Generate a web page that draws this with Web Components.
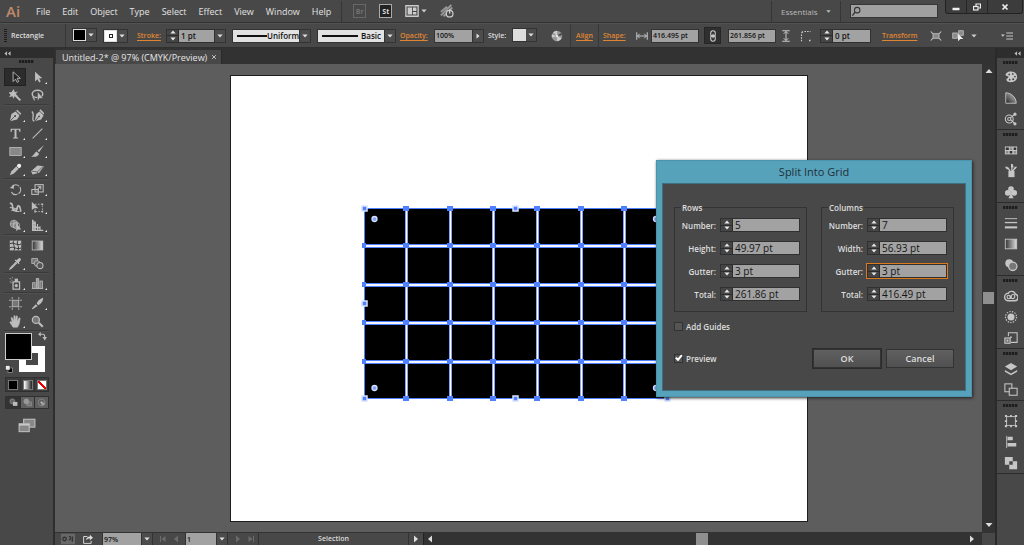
<!DOCTYPE html>
<html lang="en">
<head>
<meta charset="utf-8">
<title>Untitled-2</title>
<style>
html, body { margin: 0; height: 100%; }
body { font-family: "Open Sans", "Noto Sans", sans-serif; font-size: 9px; color: #dedede; background: #5d5d5d; overflow: hidden; }
</style>
</head>
<body>
<app-window></app-window>
<script>
const RESET = `
  *, *::before, *::after { box-sizing: border-box; }
  button, input, select { font: inherit; color: inherit; margin: 0; padding: 0; border: 0; border-radius: 0; background: none; appearance: none; outline: 0; }
  button { display: inline-flex; align-items: center; justify-content: center; }
  a { color: #e08633; text-decoration: underline; text-underline-offset: 2px; white-space: nowrap; }
`;
function define(name, css, render) {
  customElements.define(name, class extends HTMLElement {
    connectedCallback() {
      if (this.shadowRoot) return;
      const root = this.attachShadow({ mode: "open" });
      root.innerHTML = `<style>${RESET}${css}</style>${render(this)}`;
    }
  });
}

/* ---------- icons, all on a 16 x 16 field ---------- */
const L = 'fill="none" stroke="currentColor"';
const ICONS = {
  select: `<path d="M5 1v12l3-3 2 4 2-1-2-4h4z" fill="#222" stroke="currentColor" stroke-width="1.1"/>`,
  direct: `<path d="M5 1v12l3-3 2 4 2-1-2-4h4z" fill="currentColor"/>`,
  wand: `<path d="M7 7l7 7" stroke="currentColor" stroke-width="2.4"/><path d="M6 0l1 4 4-1-3 3 3 2-4 0-1 4-2-3-4 1 2-3-3-3 4 0z" fill="currentColor"/>`,
  lasso: `<ellipse cx="8" cy="6" rx="6.500" ry="4.500" ${L} stroke-width="1.8"/><path d="M3 9c-2 2 2 2 1 5" ${L} stroke-width="1.500"/><path d="M8 3v12l2.500-3.500h4.500z" fill="currentColor" stroke="#484848" stroke-width=".6"/>`,
  pen: `<path d="M1 15l2-9 5-3 5 5-3 5z" fill="currentColor"/><path d="M9.500 1.500l5 5" stroke="currentColor" stroke-width="2"/><path d="M1 15l6-6" stroke="#444"/><circle cx="7.500" cy="8.500" r="1.200" fill="#444"/>`,
  curve: `<path d="M4.500 15l2-9 4-3 5 5-3 5z" fill="currentColor"/><path d="M11 1l5 5" stroke="currentColor" stroke-width="2"/><path d="M5 15l5-6" stroke="#444"/><circle cx="10" cy="9" r="1" fill="#444"/><path d="M4 15c-5-2 2-8-3-12" ${L} stroke-width="1.500"/>`,
  type: `<path d="M2 2h12v4h-1l-1-2.500H9.200V12.500l2 .8v.7H4.800v-.7l2-.8V3.500H4L3 6H2z" fill="currentColor"/>`,
  line: `<path d="M2 14L14 2" stroke="currentColor" stroke-width="1.300"/>`,
  rect: `<rect x="1" y="3" width="14" height="10" fill="#888" stroke="currentColor"/>`,
  brush: `<path d="M16 0L8 7l2 2z" fill="currentColor"/><path d="M7 8l3 3c-2 4-6 4-10 3 4-1 4-5 7-6z" fill="currentColor"/>`,
  pencil: `<path d="M11 2l3 3-8 8-5 2 2-5z" fill="currentColor"/><circle cx="12.500" cy="3.500" r="2.500" fill="#eee"/><path d="M9 4l3 3" stroke="#555"/>`,
  eraser: `<path d="M0 10l8-7 8 1-6 8-8 2z" fill="currentColor"/><path d="M1 10l7 1 7-7M8 11v2" fill="none" stroke="#555"/>`,
  rotate: `<path d="M4 4a6 6 0 1 1-1 7" ${L} stroke-width="1.500" stroke-dasharray="9 1.500"/><path d="M1 6l5 1 0-5z" fill="currentColor"/>`,
  scale: `<rect x="1" y="8" width="8" height="6" ${L} stroke-width="1.300"/><rect x="5" y="2" width="10" height="9" ${L} stroke-width="1.300"/><path d="M7 9l4-4M8 4h4v4" ${L} stroke-width="1.300"/>`,
  width: `<path d="M1 3c6-1 1 9 6 9s2-7 5-6 1 5 3 7" ${L} stroke-width="2"/><path d="M1 8l6 1M3 12l8-4M8 13l5 0" ${L} stroke-width="1.300"/>`,
  free: `<rect x="5" y="4" width="9" height="9" ${L} stroke-dasharray="2 1.500"/><path d="M1 1v10l3-2 5 0z" fill="currentColor"/><path d="M13 3h2v2h-2zM13 12h2v2h-2zM4 12h2v2H4z" fill="currentColor"/>`,
  shape: `<circle cx="6" cy="6" r="4.500" fill="#777" stroke="currentColor"/><circle cx="9" cy="8" r="4" ${L}/><path d="M2 6h9M6 2v8" ${L}/><path d="M9 5v10l2-2h4z" fill="currentColor"/>`,
  persp: `<path d="M2 1v13h13M5 3v11M8 6v8M11 9v5M2 5l4 1M2 9l9 2" ${L} stroke-width="1.500"/><path d="M2 1l4 3v10H2z" fill="currentColor" opacity=".7"/>`,
  mesh: `<rect x="1" y="2" width="14" height="12" fill="currentColor"/><path d="M1 6c4-3 9 3 14 0M1 11c4-3 9 3 14 0M6 2c-3 4 3 8 0 12M11 2c-3 4 3 8 0 12" fill="none" stroke="#333" stroke-width="1.200"/>`,
  gradient: `<defs><linearGradient id="g"><stop offset="0" stop-color="#333"/><stop offset="1" stop-color="#ddd"/></linearGradient></defs><rect x="1.500" y="2.500" width="13" height="11" fill="url(#g)" stroke="currentColor"/>`,
  dropper: `<path d="M9 6l-7 7-1 2 2-1 7-7" ${L} stroke-width="1.300"/><path d="M7 4l5 5 1-1-1-1 3-4-2-2-4 3-1-1z" fill="currentColor"/>`,
  blend: `<rect x="1" y="2" width="7" height="6" fill="#777" stroke="currentColor"/><circle cx="7.500" cy="8" r="3.500" fill="#666" stroke="currentColor"/><circle cx="11" cy="10.500" r="3.800" fill="#555" stroke="currentColor" stroke-width="1.300"/>`,
  spray: `<rect x="5" y="6" width="8" height="9" ${L} stroke-width="1.500"/><path d="M7 2h4v4H7z" fill="currentColor"/><circle cx="9" cy="10.500" r="2" fill="currentColor"/><path d="M1 2h1M3 4h1M1 6h1M4 1h1M3 7h1" stroke="currentColor" stroke-width="1.300"/>`,
  graph: `<path d="M1 14h14" ${L}/><rect x="2" y="7" width="3" height="7" fill="#777" stroke="currentColor"/><rect x="6.500" y="2" width="3" height="12" fill="#999" stroke="currentColor"/><rect x="11" y="5" width="3" height="9" fill="#777" stroke="currentColor"/>`,
  artboard: `<rect x="4" y="4" width="8" height="8" fill="#777" stroke="currentColor"/><path d="M4 0v3M12 0v3M4 13v3M12 13v3M0 4h3M0 12h3M13 4h3M13 12h3" ${L}/>`,
  knife: `<path d="M15 1c-4 1-7 4-8 7l2 2c4-2 6-5 6-9zM6 9l2 2-6 4-1-1z" fill="currentColor"/>`,
  hand: `<path d="M4 9L2.500 3.500l1.300-.3L6 7V1h1.500v6L9 1l1.400.4L10 8l2.500-4.500 1.300.5L12.500 11l-2 4H5L1 9l1-1z" fill="currentColor" stroke="currentColor" stroke-width=".7"/>`,
  zoom: `<circle cx="6" cy="6" r="4.300" fill="#777" stroke="currentColor" stroke-width="1.600"/><path d="M9.500 9.500l5 5" stroke="currentColor" stroke-width="2.600"/>`,
  swap: `<path d="M3 4h6q3 0 3 5" ${L} stroke-width="2"/><path d="M0 4l5-4v8zM8 9h8l-4 6z" fill="currentColor"/>`,
  initial: `<rect x="6" y="6" width="9" height="9" fill="#000" stroke="#999" stroke-width="1.500"/><rect x="1" y="1" width="9" height="9" fill="#eee" stroke="#222"/>`,
  draw1: `<circle cx="6" cy="6" r="4.500" fill="#666" stroke="currentColor"/><rect x="7" y="7" width="8" height="7" fill="#bbb"/>`,
  draw2: `<rect x="7" y="7" width="8" height="7" fill="#777" stroke="currentColor"/><circle cx="6" cy="6" r="4.500" fill="#999" stroke="currentColor"/>`,
  draw3: `<circle cx="8" cy="8" r="6" ${L}/><path d="M8 8h6v4l-6 2z" fill="#999"/><circle cx="8" cy="8" r="2" fill="#bbb"/>`,
  screen: `<rect x="5" y="2" width="10" height="7" fill="#888" stroke="currentColor"/><rect x="1" y="6" width="9" height="7" fill="#888" stroke="currentColor"/><path d="M1 7h9" stroke="#ddd"/>`,
  palette: `<path d="M9 2c-5-1-8 3-7 4 1 2 3 0 3 2s-3 1-2 4 12 3 12-4c0-4-3-6-6-6z" fill="currentColor"/><circle cx="6" cy="5" r="1" fill="#444"/><circle cx="10" cy="4.500" r="1" fill="#444"/><circle cx="12.500" cy="7.500" r="1" fill="#444"/><circle cx="10.500" cy="10.500" r="1.200" fill="#444"/><circle cx="6.500" cy="11" r="1" fill="#444"/>`,
  guide: `<defs><linearGradient id="q" x1="0" y1="1" x2="1" y2="0"><stop offset="0" stop-color="#222"/><stop offset="1" stop-color="#ccc"/></linearGradient></defs><path d="M2 2c6 0 12 5 12 12H2z" fill="url(#q)" stroke="currentColor"/>`,
  themes: `<circle cx="6" cy="8" r="4.500" ${L} stroke-width="1.200"/><circle cx="6" cy="8" r="1.800" ${L} stroke-width="1.200"/><path d="M7 7l5-4M8 9l4 4" ${L} stroke-width="1.300"/><circle cx="12.500" cy="2.500" r="1.800" fill="currentColor"/><circle cx="12.500" cy="13.500" r="1.800" fill="currentColor"/>`,
  swatches: `<rect x="1" y="4" width="14" height="9" fill="currentColor"/><path d="M2 5h3.500v3H2zM11 5h3v3h-3zM6.500 9h3v3h-3z" fill="#333"/><path d="M6.500 5h3v3h-3zM2 9h3v3H2zM11 9h3v3h-3z" fill="#8c8c8c"/>`,
  brushes: `<rect x="5" y="8" width="7" height="7" fill="currentColor"/><path d="M7 8L4 4M9 8V3M10 8l3-4" ${L} stroke-width="1.500"/><path d="M1 3l3 0 1 3-2 0zM8 0h2l1 4H8zM12 3l3 0-2 3z" fill="currentColor"/>`,
  club: `<circle cx="8" cy="4.500" r="3.200" fill="currentColor"/><circle cx="4.300" cy="9" r="3.200" fill="currentColor"/><circle cx="11.700" cy="9" r="3.200" fill="currentColor"/><path d="M7 7h2l0 4 2 4H5l2-4z" fill="currentColor"/>`,
  stroke: `<path d="M1 3h14" stroke="currentColor"/><path d="M1 7.500h14" stroke="currentColor" stroke-width="1.500"/><path d="M1 13h14" stroke="currentColor" stroke-width="2.400"/>`,
  transp: `<circle cx="6" cy="6" r="4.500" fill="currentColor"/><circle cx="10" cy="9.500" r="4.800" fill="#777" stroke="currentColor" stroke-width="1.500"/>`,
  cloud: `<path d="M5 13.500a4.300 4.300 0 0 1 0-8.600C6 2 12 1.500 13 6a3.800 3.800 0 0 1-1 7.500z" ${L} stroke-width="1.600"/><circle cx="5.500" cy="9.200" r="2" ${L} stroke-width="1.300"/><path d="M6 10.500c3 0 2-5 4.500-4.500s2.500 4.500 0 5-3-2-4-3" ${L} stroke-width="1.300"/>`,
  appear: `<circle cx="8" cy="8" r="4" fill="currentColor"/><circle cx="8" cy="8" r="6.300" ${L} stroke-width="1.400" stroke-dasharray="1.500 1.500"/>`,
  styles: `<path d="M5 6V2h10v11H8" ${L} stroke-width="1.200"/><rect x="1" y="8" width="6" height="6" fill="#666" stroke="currentColor" stroke-width="1.300"/><circle cx="4" cy="11" r="1.200" fill="currentColor"/><circle cx="8" cy="7" r="1" fill="currentColor"/>`,
  layers: `<path d="M8 1l7 4-7 4.500L1 5z" fill="currentColor"/><path d="M1 9l7 4 7-4v2l-7 4-7-4z" fill="currentColor"/>`,
  boards: `<rect x="1" y="1" width="8" height="9" ${L} stroke-width="1.200"/><rect x="6" y="6" width="9" height="8" fill="#484848" stroke="currentColor" stroke-width="1.200"/>`,
  transform: `<rect x="3" y="3" width="10" height="10" ${L}/><path d="M1 1h2.500v2.500H1zM7 1h2v2.500H7zM12.500 1H15v2.500h-2.500zM1 7h2.500v2H1zM12.500 7H15v2h-2.500zM1 12.500h2.500V15H1zM7 12.500h2V15H7zM12.500 12.500H15V15h-2.500z" fill="currentColor"/>`,
  align: `<path d="M3 1v14" stroke="currentColor"/><path d="M4 2h6v4H4zM4 9h10v4H4z" fill="currentColor"/>`,
  pathf: `<path d="M1 1h9v5h5v9H6v-5H1z" fill="currentColor"/><path d="M6 6h4v4H6z" fill="#484848"/>`,
  arrange: `<path d="M1 2h14v12H1z" ${L} stroke-width="1.500"/><path d="M3 4h5v8H3zM9 4h4v4H9zM9 9h4v3H9z" fill="currentColor"/>`,
  power: `<path d="M1 9l7-6M1 13L13 1M4 14L14 4" stroke="#999" stroke-width="2.200"/><circle cx="11" cy="11" r="3.800" fill="#484848" stroke="currentColor" stroke-width="1.400"/><path d="M11 6v5" stroke="currentColor" stroke-width="1.500"/>`,
  search: `<circle cx="9" cy="6" r="4" fill="none" stroke="#333" stroke-width="1.500"/><path d="M6 9l-4 5" stroke="#333" stroke-width="2"/>`,
  globe: `<circle cx="8" cy="8" r="7" fill="#999"/><path d="M8 8L3 3a7 7 0 0 1 5-2zM8 8l6 3a7 7 0 0 1-6 4zM8 8l-7 2 0-4z" fill="#ccc"/><path d="M8 8l5-4 2 3z" fill="#444"/><circle cx="8" cy="8" r="1.500" fill="#eee"/>`,
  wide: `<path d="M1 3v10M15 3v10M2 8h12M5 5L2 8l3 3M11 5l3 3-3 3" ${L} stroke-width="1.300"/>`,
  tall: `<path d="M3 1h10M3 15h10M8 2v12M5 5l3-3 3 3M5 11l3 3 3-3" ${L} stroke-width="1.300"/>`,
  chain: `<rect x="5" y="1" width="6" height="8" rx="3" ${L} stroke-width="1.400"/><rect x="5" y="7" width="6" height="8" rx="3" ${L} stroke-width="1.400"/><path d="M8 5v6" ${L} stroke-width="1.300"/>`,
  corner: `<path d="M2 15V6M6 2h8" ${L} stroke-width="1.500" stroke-dasharray="2 1.500"/><path d="M2 4l2-2" ${L} stroke-width="1.500"/><path d="M12 14h2" ${L} stroke-width="2"/>`,
  isolate: `<rect x="4" y="5" width="8" height="6" fill="#888" stroke="currentColor"/><path d="M1 2l3 3M15 2l-3 3M1 14l3-3M15 14l-3-3" ${L} stroke-width="1.400"/>`,
  similar: `<rect x="1" y="4" width="6" height="7" fill="#888" stroke="currentColor"/><rect x="9" y="1" width="6" height="6" fill="#888" stroke="currentColor"/><path d="M8 5v10l3-3h4z" fill="#eee"/>`,
  menu: `<path d="M0 6h5L2.500 9z" fill="currentColor"/><path d="M7 4h9M7 8h9M7 12h9" ${L} stroke-width="1.300"/>`,
  down: `<path d="M1 4h14l-7 8z" fill="currentColor"/>`,
  up: `<path d="M1 12h14L8 4z" fill="currentColor"/>`,
  right: `<path d="M4 1v14l8-7z" fill="currentColor"/>`,
  left: `<path d="M12 1v14L4 8z" fill="currentColor"/>`,
  first: `<path d="M3 2v12" ${L} stroke-width="2"/><path d="M13 2v12L5 8z" fill="currentColor"/>`,
  last: `<path d="M13 2v12" ${L} stroke-width="2"/><path d="M3 2v12l8-6z" fill="currentColor"/>`,
  collapse: `<path d="M7 3v10L1 8zM15 3v10L9 8z" fill="currentColor"/>`,
  min: `<path d="M1 12h14" stroke="currentColor" stroke-width="5"/>`,
  restore: `<path d="M6 6V2h9v8h-4" ${L} stroke-width="2.400"/><rect x="1" y="7" width="9" height="7" ${L} stroke-width="2.400"/>`,
  close: `<path d="M3 3l10 10M13 3L3 13" stroke="currentColor" stroke-width="3.400"/>`,
  cross: `<path d="M3 3l10 10M13 3L3 13" stroke="currentColor" stroke-width="2"/>`,
  proof: `<rect x="0" y="2" width="16" height="12" fill="#686868"/><path d="M2 8a2 2 0 1 1 4 0 2 2 0 1 1-4 0M9 5a2 2 0 1 1 0 4M13 5v6" stroke="#333" fill="none" stroke-width="1.500"/>`,
  share: `<path d="M7 4H1v11h12v-4" ${L} stroke-width="1.500"/><path d="M5 10c0-4 3-6 6-6V1l5 5-5 4V7c-3 0-4 1-6 3z" fill="currentColor"/>`,
};
define("ui-icon", `:host{display:inline-block;flex:none;width:var(--size,12px);height:var(--size,12px)} svg{display:block;width:100%;height:100%}`,
  h => `<svg viewBox="0 0 16 16" aria-hidden="true">${ICONS[h.getAttribute("name")]}</svg>`);

define("grip-bar", `:host{display:block;width:15px;height:3px;background:repeating-linear-gradient(90deg,#1d1d1d 0 2px,#3a3a3a 2px 3px)}
  :host([vertical]){width:3px;height:13px;background:repeating-linear-gradient(#1d1d1d 0 1px,#484848 1px 2px)}`, () => ``);

/* number box with spinner; the label comes in by attribute */
define("spin-field", `
  :host{display:grid;grid-template-columns:1fr auto;align-items:center;column-gap:4px}
  :host([bare]){grid-template-columns:1fr}
  label{text-align:right;font-weight:600;font-size:8px}
  .box{display:flex;height:14px;width:var(--field,80px);border:1px solid #303030;background:#a2a2a2}
  :host([focused]) .box{outline:1px solid #dc7a1c}
  .steps{display:flex;flex-direction:column;width:12px;background:#454545;border-right:1px solid #2c2c2c;flex:none}
  .steps button{flex:1;min-height:0;--size:6px;color:#e8e8e8}
  .steps button+button{border-top:1px solid #2c2c2c}
  input{min-width:0;flex:1;color:#151515;padding-left:2px;font-size:var(--fs,10px)}`,
  h => { const l = h.getAttribute("label");
    return `${h.hasAttribute("bare") ? "" : `<label for="f">${l}</label>`}<div class="box"><div class="steps"><button aria-label="Increase"><ui-icon name="up"></ui-icon></button><button aria-label="Decrease"><ui-icon name="down"></ui-icon></button></div><input id="f" ${h.hasAttribute("bare") ? `aria-label="${l}"` : ""} value="${h.getAttribute("value")}"></div>`; });

/* plain text box, with an optional arrow button */
define("value-box", `
  :host{display:flex;height:14px;width:var(--field,48px);border:1px solid #333;background:#a2a2a2}
  input{min-width:0;flex:1;color:#151515;padding-left:1px;font-size:var(--fs,7px);font-weight:600}
  button{width:11px;background:#4c4c4c;border-left:1px solid #333;--size:6px;color:#e0e0e0}`,
  h => `<input aria-label="${h.getAttribute("label")}" value="${h.getAttribute("value")}">${h.hasAttribute("arrow") ? `<button aria-label="Show values"><ui-icon name="${h.getAttribute("arrow")}"></ui-icon></button>` : ""}`);

define("swatch-menu", `
  :host{display:block}
  button{width:25px;height:14px;border:1px solid #333;background:#4c4c4c;--size:6px}
  span{width:13px;height:12px;background:var(--fill,#000);border:1px solid #ddd;display:grid;place-items:center}
  :host([ring]) span::after{content:"";width:4px;height:4px;border:1px solid #222}
  ui-icon{margin:auto}`,
  h => `<button aria-label="${h.getAttribute("label")}"><span></span><ui-icon name="down"></ui-icon></button>`);

define("line-select", `
  :host{display:flex;position:relative;width:79px;height:14px;border:1px solid #333}
  select{width:100%;background:linear-gradient(#111,#111) 4px 5px/var(--line,30px) 2px no-repeat,#e2e2e2;color:#111;font-weight:600;font-size:8px;padding-left:var(--indent,34px)}
  .arrow{position:absolute;right:0;top:0;bottom:0;width:11px;background:#4c4c4c;border-left:1px solid #333;display:grid;place-items:center;--size:6px;pointer-events:none}`,
  h => `<select aria-label="${h.getAttribute("label")}"><option>${h.getAttribute("value")}</option></select><div class="arrow"><ui-icon name="down"></ui-icon></div>`);

/* ---------- bars ---------- */
define("menu-bar", `
  :host{display:flex;align-items:center;height:23px;background:#484848;border-bottom:1px solid #333;position:relative}
  .logo{width:30px;padding-left:6px;font-size:15px;font-weight:600;color:#c08a68;line-height:20px}
  nav{display:flex;gap:12px;padding-left:6px}
  nav button{font-size:9px;color:#e2e2e2}
  .sep{width:1px;height:21px;background:#363636}
  .tools{display:flex;align-items:center;gap:13px;margin-left:11px;--size:14px;color:#ccc}
  nav+.sep{margin-left:10px}
  .tools>button{height:14px}
  .tag{width:13px;height:13px;border:1px solid #686868;color:#707070;font-size:7px;font-weight:700}
  .tag.on{border-color:#aaa;background:#222;color:#ddd}
  .small{--size:6px;margin-left:2px}
  .right{display:flex;align-items:center;gap:9px;margin-left:auto;padding-right:86px}
  .right button{width:50px;font-size:8px;color:#bbb;gap:8px;--size:5px;justify-content:flex-start}
  .search{display:flex;align-items:center;width:88px;height:14px;background:#a0a0a0;border:1px solid #363636;--size:11px}
  .search input{flex:1;min-width:0;color:#111}
  .win{position:absolute;right:1px;top:0;display:flex;width:78px;height:14px;border:1px solid #222;border-top:0;border-radius:0 0 3px 3px;background:#3c3c3c;--size:8px;color:#eee}
  .win button{width:21px;border-right:1px solid #262626}.win button:last-child{flex:1;border:0}`,
  () => `<div class="logo">Ai</div><nav>${["File","Edit","Object","Type","Select","Effect","View","Window","Help"].map(t=>`<button>${t}</button>`).join("")}</nav>
  <div class="sep"></div>
  <div class="tools"><button class="tag">Br</button><button class="tag on">St</button><button aria-label="Arrange documents"><ui-icon name="arrange"></ui-icon><ui-icon class="small" name="down"></ui-icon></button><button aria-label="GPU performance"><ui-icon name="power"></ui-icon></button></div>
  <div class="right"><div class="sep"></div><button>Essentials<ui-icon name="down"></ui-icon></button><div class="sep"></div><div class="search"><ui-icon name="search"></ui-icon><input aria-label="Search"></div></div>
  <div class="win"><button aria-label="Minimize"><ui-icon name="min"></ui-icon></button><button aria-label="Restore"><ui-icon name="restore"></ui-icon></button><button aria-label="Close"><ui-icon name="close"></ui-icon></button></div>`);

define("control-bar", `
  :host{display:flex;align-items:center;height:25px;background:#484848;border-bottom:1px solid #303030;border-top:1px solid #525252;font-size:7px;font-weight:600;padding:0 11px 0 4px}
  .row{display:grid;align-items:center;grid-template-columns:7px 54px 7px 31px 34px 29px 66px 85px 83px 34px 54px 24px 39px 19px 6px 22px 5px 33px 15px 53px 24px 52px 20px 20px 62px 48px 22px 19px 12px}
  .sep{width:1px;height:23px;background:#383838}
  .chain{width:17px;height:17px;background:#2f2f2f;border:1px solid #262626;color:#ccc}
  .weight{display:flex}
  ui-icon{color:#ccc}
  .end{margin-left:auto}
  a{font-size:7px}`,
  () => `<div class="row">
  <grip-bar vertical></grip-bar><span>Rectangle</span><div class="sep"></div>
  <swatch-menu label="Fill"></swatch-menu><swatch-menu ring label="Stroke colour" style="--fill:#fff"></swatch-menu>
  <a href="#stroke">Stroke:</a>
  <div class="weight"><spin-field bare label="Stroke weight" value="1 pt" style="--field:49px;--fs:8px"></spin-field><swatch-arrow></swatch-arrow></div>
  <line-select label="Width profile" value="Uniform"></line-select><line-select label="Brush" value="Basic" style="--line:36px;--indent:43px"></line-select>
  <a href="#opacity">Opacity:</a><value-box label="Opacity" value="100%" arrow="right" style="--field:50px"></value-box>
  <span>Style:</span><swatch-menu label="Graphic style" style="--fill:#ddd"></swatch-menu><ui-icon name="globe"></ui-icon><div class="sep"></div>
  <a href="#align">Align</a><div class="sep"></div><a href="#shape">Shape:</a><ui-icon name="wide"></ui-icon>
  <value-box label="Width" value="416.495 pt"></value-box><button class="chain" aria-label="Link width and height"><ui-icon name="chain"></ui-icon></button>
  <value-box label="Height" value="261.856 pt"></value-box><ui-icon name="tall"></ui-icon><ui-icon name="corner"></ui-icon>
  <spin-field bare label="Corner radius" value="0 pt" style="--field:51px;--fs:8px"></spin-field>
  <a href="#transform">Transform</a><ui-icon name="isolate"></ui-icon><ui-icon name="similar"></ui-icon><ui-icon name="down" style="--size:6px"></ui-icon></div>
  <ui-icon class="end" name="menu"></ui-icon>`);

define("swatch-arrow", `:host{display:block} button{width:11px;height:14px;background:#4c4c4c;border:1px solid #333;border-left:0;--size:6px}`,
  () => `<button aria-label="Show values"><ui-icon name="down"></ui-icon></button>`);

/* ---------- left tools ---------- */
const TOOLS = [["select","direct"],["wand","lasso"],null,["pen","curve"],["type","line"],["rect","brush"],["pencil","eraser"],null,["rotate","scale"],["width","free"],["shape","persp"],null,["mesh","gradient"],["dropper","blend"],null,["spray","graph"],null,["artboard","knife"],["hand","zoom"],null];
const PLAIN = ["select","wand","lasso","mesh","gradient","blend","artboard","zoom"];
define("tool-box", `
  :host{display:flex;flex-direction:column;width:55px;background:#484848;border-right:2px solid #2e2e2e}
  .head{height:10px;background:#2d2d2d;padding:1px 4px;--size:7px;color:#bbb;display:flex;align-items:center;flex:none}
  grip-bar{margin:2px 0 5px 19px;flex:none}
  .tools{padding:0 4px;display:grid;color:#bdbdbd;--size:13px}
  .pair{display:grid;grid-template-columns:22px 22px;height:18px}
  hr{width:100%;height:2px;margin:0;border:0;border-top:1px solid #3a3a3a;background:#505050}
  .tool{position:relative}
  .tool.more::after{content:"";position:absolute;right:1px;bottom:2px;border:1px solid #eee;border-top-color:transparent;border-left-color:transparent}
  .tool.on{background:#2c2c2c;border:1px solid #222}
  .paint{position:relative;height:43px;margin-left:5px}
  .paint>*{position:absolute}
  .fill{left:0;top:1px;width:27px;height:27px;background:#000;border:1px solid #ccc}
  .outline{left:14px;top:14px;width:26px;height:26px;border:7px solid #fff;background:#484848}
  .swap{right:6px;top:0;--size:9px;color:#bbb}.init{left:0;bottom:2px;--size:8px}
  .seg{display:grid;grid-template-columns:repeat(3,1fr);width:44px;height:15px;margin:2px 0 4px 5px;border:1px solid #303030;background:#3c3c3c;place-items:center;--size:9px;flex:none}
  .seg button{width:100%;height:100%;color:#999}
  .seg button+button{border-left:1px solid #303030}
  .seg i{width:10px;height:10px;border:1px solid #777}
  .black{background:#000}.fade{background:linear-gradient(90deg,#fff,#222)}
  .none{background:linear-gradient(to bottom right,#fff 40%,#e00 40% 60%,#fff 60%);transform:scaleX(-1)}
  .modes{background:#606060;height:13px;margin-top:0}.modes .on{background:#333}
  .screen{--size:18px;margin:4px auto 0;color:#bbb}`,
  () => `<div class="head"><ui-icon name="collapse"></ui-icon></div><grip-bar></grip-bar>
  <div class="tools">${TOOLS.map(p => p ? `<div class="pair">${p.map(n=>`<button aria-label="${n} tool" class="tool ${PLAIN.includes(n)?"":"more"} ${n==="select"?"on":""}"><ui-icon name="${n}"></ui-icon></button>`).join("")}</div>` : `<hr>`).join("")}</div>
  <div class="paint"><button class="outline" aria-label="Stroke"></button><button class="fill" aria-label="Fill"></button><ui-icon class="swap" name="swap"></ui-icon><ui-icon class="init" name="initial"></ui-icon></div>
  <div class="seg"><button aria-label="Color"><i class="black"></i></button><button aria-label="Gradient"><i class="fade"></i></button><button aria-label="None"><i class="none"></i></button></div>
  <div class="seg modes"><button class="on" aria-label="Draw normal"><ui-icon name="draw1"></ui-icon></button><button aria-label="Draw behind"><ui-icon name="draw2"></ui-icon></button><button aria-label="Draw inside"><ui-icon name="draw3"></ui-icon></button></div>
  <button class="screen" aria-label="Screen mode"><ui-icon name="screen"></ui-icon></button>`);

/* ---------- right panels ---------- */
const PANELS = [["palette","guide","themes"],["swatches","brushes","club"],["stroke","gradient","transp"],["cloud","appear","styles"],["layers","boards"],["transform","align","pathf"]];
define("panel-dock", `
  :host{display:block;width:29px;background:#484848;border-left:2px solid #2a2a2a}
  .head{height:10px;background:#2d2d2d;display:flex;justify-content:flex-end;align-items:center;padding-right:3px;--size:7px;color:#bbb}
  .group{border-bottom:1px solid #2c2c2c;display:grid;grid-auto-rows:21px;grid-template-rows:8px;justify-items:center;--size:14px;color:#c6c6c6}
  .group+.group{grid-template-rows:9px}
  .group grip-bar{align-self:center}`,
  () => `<div class="head"><ui-icon name="collapse"></ui-icon></div>${PANELS.map(g=>`<div class="group"><grip-bar></grip-bar>${g.map(n=>`<button aria-label="${n} panel"><ui-icon name="${n}"></ui-icon></button>`).join("")}</div>`).join("")}`);

/* ---------- document ---------- */
function splitArt() {
  const x0 = 133, x1 = 436, y0 = 132, y1 = 322, B = "#4f80ff";
  const gx = [175, 219, 262, 306, 350, 393], gy = [169, 208, 246, 285];
  let s = `<rect x="${x0+.5}" y="${y0+.5}" width="${x1-x0}" height="${y1-y0}" fill="#000" stroke="${B}"/>`;
  for (const y of gy) s += `<rect x="${x0}" y="${y-1}" width="${x1-x0}" height="4" fill="${B}"/>`;
  for (const x of gx) s += `<rect x="${x-1}" y="${y0}" width="3" height="${y1-y0}" fill="#86a3f5"/>`;
  for (const y of gy) s += `<rect x="${x0+1}" y="${y}" width="${x1-x0-1}" height="2" fill="#f4f7ff"/>`;
  for (const x of gx) s += `<rect x="${x}" y="${y0+1}" width="1" height="${y1-y0-1}" fill="#fff"/>`;
  for (const x of gx) for (const y of [y0, ...gy, y1]) s += `<rect x="${x-3}" y="${y-2}" width="6" height="5" fill="${B}"/>`;
  for (const y of gy) s += `<rect x="${x0-2}" y="${y-2}" width="4" height="5" fill="${B}"/>`;
  for (const [x, y] of [[x0,y0],[x0,227],[x0,y1],[284,y0],[284,y1],[x1,y1]]) s += `<rect x="${x-2}" y="${y-2}" width="5" height="5" fill="${B}" stroke="#d8e3ff" stroke-width="1.500"/>`;
  for (const [x, y] of [[143.5,143],[143.5,312],[425,143],[425,312]]) s += `<circle cx="${x}" cy="${y}" r="2.500" fill="#7ea0f5" stroke="#d4e0ff" stroke-width="1.300"/>`;
  return s;
}
define("doc-view", `
  :host{display:grid;grid-template:16px 1fr 13px / 1fr 13px;min-width:0;min-height:0}
  .tabs{grid-column:1/3;background:#323232;display:flex;align-items:flex-end;padding-left:1px}
  .tab{height:14px;width:166px;padding:0 4px 0 6px;justify-content:space-between;background:#484848;border-right:1px solid #292929;font-size:9px;color:#e4e4e4;--size:6px;white-space:nowrap}
  .canvas{background:#5d5d5d;display:grid;place-items:center;min-height:0;padding:1px 0 0 1px}
  .board{height:calc(100% - 22px);aspect-ratio:576/445;background:#fff;outline:1px solid #1d1d1d}
  .board svg{display:block;width:100%;height:100%}
  .vbar{background:#333;display:flex;flex-direction:column;align-items:center;justify-content:space-between;padding:3px 0;--size:8px;color:#ddd}
  .thumb{width:11px;height:12px;background:#8f8f8f}
  status-bar{grid-column:1/3}`,
  () => `<div class="tabs"><button class="tab">Untitled-2* @ 97% (CMYK/Preview)<ui-icon name="cross"></ui-icon></button></div>
  <div class="canvas"><div class="board"><svg viewBox="0 0 576 445" role="img" aria-label="Artboard">${splitArt()}</svg></div></div>
  <div class="vbar"><ui-icon name="up"></ui-icon><div class="thumb"></div><ui-icon name="down"></ui-icon></div>
  <status-bar></status-bar>`);

define("status-bar", `
  :host{display:flex;background:#484848;border-top:1px solid #333;--size:8px;font-size:7px;font-weight:600;align-items:center;overflow:hidden}
  .set{display:grid;grid-template-columns:22px 19px 57px 13px 13px 49px 13px 11px 151px 14px;align-items:center;padding-left:6px;color:#ddd}
  .off{color:#6b6b6b}
  .proof{--size:14px}.share{--size:10px}
  .name{border-left:1px solid #333;border-right:1px solid #333;text-align:center;line-height:14px}
  .set ui-icon:last-child{justify-self:center}
  .hbar{flex:1;height:12px;background:#333;border-left:1px solid #222;display:grid;grid-template-columns:10px 1fr 12px 1fr 10px;align-items:center;padding:0 4px 0 2px;color:#ddd;margin-right:13px}
  .thumb{height:12px;background:#8f8f8f}`,
  () => `<div class="set"><ui-icon class="proof" name="proof"></ui-icon><ui-icon class="share" name="share"></ui-icon>
  <value-box label="Zoom" value="97%" arrow="down" style="--field:51px"></value-box><ui-icon class="off" name="first"></ui-icon><ui-icon class="off" name="left"></ui-icon>
  <value-box label="Artboard" value="1" arrow="down" style="--field:43px"></value-box><ui-icon class="off" name="right"></ui-icon><ui-icon class="off" name="last"></ui-icon>
  <div class="name">Selection</div><ui-icon name="right"></ui-icon></div>
  <div class="hbar"><ui-icon name="left"></ui-icon><span></span><div class="thumb"></div><span></span><ui-icon name="right"></ui-icon></div>`);

/* ---------- dialog ---------- */
define("split-dialog", `
  :host{display:block;width:316px;background:#57a2bb;padding:0 5px 5px;box-shadow:1px 1px 3px #222;border:1px solid #4c93ab}
  h2{margin:0;height:22px;line-height:21px;text-align:center;font-size:11px;font-weight:400;color:#1e3038}
  .body{background:#484848;padding:19px 11px 22px;border:1px solid #3f6f80}
  .sets{display:grid;grid-template-columns:1fr 1fr;gap:14px}
  fieldset{margin:0;padding:6px 6px 10px;border:1px solid #333;display:grid;row-gap:9px;min-width:0}
  legend{font-size:8px;font-weight:600;line-height:9px;padding:0 1px}
  .check{display:flex;align-items:center;gap:3px;font-size:8px;font-weight:600;height:11px}
  .check input{width:9px;height:9px;background:#555;border:1px solid #333;display:grid;place-items:center}
  .check input:checked::before{content:"";width:4px;height:7px;border:solid #fff;border-width:0 2px 2px 0;transform:rotate(40deg) translate(-1px,-1px)}
  .guides{margin-top:9px}
  .foot{display:flex;align-items:center;gap:5px;margin-top:17px}
  .foot .check{margin-right:auto}
  .foot button{width:68px;height:19px;background:linear-gradient(#606060,#505050);border:1px solid #333;font-size:9px;font-weight:600}
  .foot .ok{outline:1px solid #2b2b2b}`,
  () => `<h2>Split Into Grid</h2><div class="body"><div class="sets">
  <fieldset><legend>Rows</legend><spin-field label="Number:" value="5"></spin-field><spin-field label="Height:" value="49.97 pt"></spin-field><spin-field label="Gutter:" value="3 pt"></spin-field><spin-field label="Total:" value="261.86 pt"></spin-field></fieldset>
  <fieldset><legend>Columns</legend><spin-field label="Number:" value="7"></spin-field><spin-field label="Width:" value="56.93 pt"></spin-field><spin-field focused label="Gutter:" value="3 pt"></spin-field><spin-field label="Total:" value="416.49 pt"></spin-field></fieldset></div>
  <label class="check guides"><input type="checkbox">Add Guides</label>
  <div class="foot"><label class="check"><input type="checkbox" checked>Preview</label><button class="ok">OK</button><button>Cancel</button></div></div>`);

define("app-window", `
  :host{display:grid;grid-template-rows:auto auto 1fr;height:100vh;position:relative}
  .work{display:grid;grid-template-columns:auto 1fr auto;min-height:0}
  split-dialog{position:absolute;left:656px;top:160px}`,
  () => `<menu-bar></menu-bar><control-bar></control-bar><div class="work"><tool-box></tool-box><doc-view></doc-view><panel-dock></panel-dock></div><split-dialog role="dialog" aria-label="Split Into Grid"></split-dialog>`);
</script>
</body>
</html>
